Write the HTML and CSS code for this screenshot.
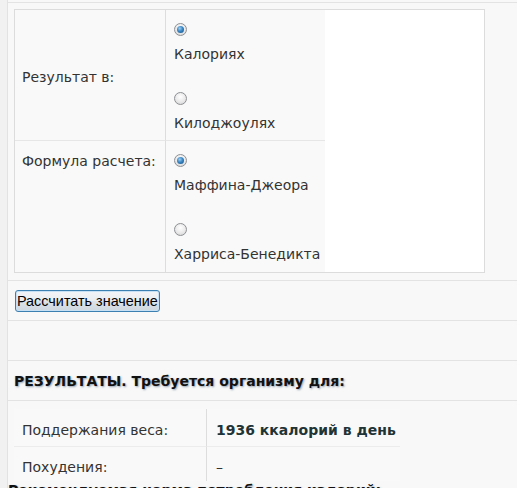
FILE: index.html
```html
<!DOCTYPE html>
<html lang="ru">
<head>
<meta charset="utf-8">
<title>Калькулятор калорий</title>
<link rel="stylesheet" href="styles.css">
</head>
<body>
<div class="page">
  <section class="section form-section">
    <div class="calc-box">
      <div class="calc-grid">
        <div class="cell label-cell middle row-first">Результат в:</div>
        <div class="cell option-cell row-first">
          <label class="option"><input type="radio" name="unit" checked><span>Калориях</span></label>
          <label class="option"><input type="radio" name="unit"><span>Килоджоулях</span></label>
        </div>
        <div class="cell label-cell top">Формула расчета:</div>
        <div class="cell option-cell row-last">
          <label class="option"><input type="radio" name="formula" checked><span>Маффина-Джеора</span></label>
          <label class="option"><input type="radio" name="formula"><span>Харриса-Бенедикта</span></label>
        </div>
      </div>
    </div>
  </section>
  <section class="section actions">
    <button class="calc-btn" type="button">Рассчитать значение</button>
  </section>
  <section class="section spacer"></section>
  <section class="section heading-section">
    <h3 class="result-title">РЕЗУЛЬТАТЫ. Требуется организму для:</h3>
  </section>
  <section class="section results">
    <div class="result-grid">
      <div class="rcell rlabel rrow-first">Поддержания веса:</div>
      <div class="rcell rvalue rrow-first"><strong>1936 ккалорий в день</strong></div>
      <div class="rcell rlabel rrow-last">Похудения:</div>
      <div class="rcell rvalue rrow-last">–</div>
    </div>
    <h3 class="next-title">Рекомендуемая норма потребления калорий:</h3>
  </section>
</div>
</body>
</html>
```
FILE: styles.css
```css
* { box-sizing: border-box; }
html, body { margin: 0; padding: 0; }
body {
  background: #f1f1f1;
  font-family: "DejaVu Sans", Verdana, sans-serif;
  font-size: 14px;
  line-height: 16px;
  color: #333;
  overflow: hidden;
  height: 488px;
}
.page {
  margin-left: 7px;
  border-left: 1px solid #e2e2e2;
  background: #f8f8f8;
  padding-top: 2px;
  min-height: 488px;
}
.section {
  border-top: 1px solid #e3e3e3;
  padding-left: 6px;
}
.form-section { padding-top: 6px; padding-bottom: 7px; }
.calc-box {
  width: 471px;
  border: 1px solid #dcdcdc;
  background: #fff;
}
.calc-grid {
  display: grid;
  grid-template-columns: 151px auto;
  justify-content: start;
}
.cell { background: #f9f9f9; }
.label-cell {
  border-right: 1px solid #dddddd;
  padding-left: 7px;
}
.label-cell.middle { display: flex; align-items: center; padding-top: 4px; }
.label-cell.top { padding-top: 12px; }
.row-first { border-bottom: 1px solid #e6e6e6; }
.option-cell {
  padding: 13px 5px 10px 8px;
  display: flex;
  flex-direction: column;
  gap: 31px;
}
.option-cell.row-last { padding-bottom: 11px; }
.option {
  display: flex;
  flex-direction: column;
  align-items: flex-start;
  gap: 10px;
}
.option span { margin-bottom: -1px; }
.option input {
  appearance: none;
  -webkit-appearance: none;
  margin: 0;
  width: 13px;
  height: 13px;
  border-radius: 50%;
  border: 1px solid #8d9093;
  background: radial-gradient(circle at 50% 35%, #ffffff 0%, #e9e9e9 55%, #cfcfcf 100%);
  display: grid;
  place-items: center;
}
.option input:checked::after {
  content: "";
  width: 7px;
  height: 7px;
  border-radius: 50%;
  background: radial-gradient(circle at 40% 35%, #9fd0f2 0%, #3a86c4 45%, #134a7a 100%);
}
.actions { padding-top: 9px; padding-bottom: 8px; }
.calc-btn {
  display: block;
  margin: 0 0 0 1px;
  height: 22px;
  padding: 0 1px;
  font-family: "Liberation Sans", Arial, sans-serif;
  font-size: 14.4px;
  color: #000;
  border: 1px solid #3c7fb1;
  border-radius: 3px;
  background: linear-gradient(#f2f4f6 0%, #eaedf0 50%, #dce2e8 51%, #cfd7df 100%);
  box-shadow: inset 0 0 0 1px #c8e0f3;
}
.spacer { height: 40px; }
.heading-section { padding-top: 12px; padding-bottom: 11px; }
.result-title, .next-title {
  margin: 0;
  font-size: 14px;
  line-height: 16px;
  font-weight: bold;
  color: #111;
  text-shadow: 1px 1px 2px rgba(60, 90, 120, 0.55);
}
.results { padding-top: 8px; }
.result-grid {
  display: grid;
  grid-template-columns: 193px 193px;
}
.rcell { background: #f9f9f9; }
.rlabel { border-right: 1px solid #dddddd; padding-left: 8px; }
.rvalue { padding-left: 9px; }
.rrow-first { padding-top: 13px; padding-bottom: 8px; border-bottom: 1px solid #ececec; }
.rrow-last { padding-top: 12px; padding-bottom: 6px; height: 34px; }
.rvalue strong { color: #1f3436; }
.next-title { margin-top: 1px; margin-left: -6px; }
```
